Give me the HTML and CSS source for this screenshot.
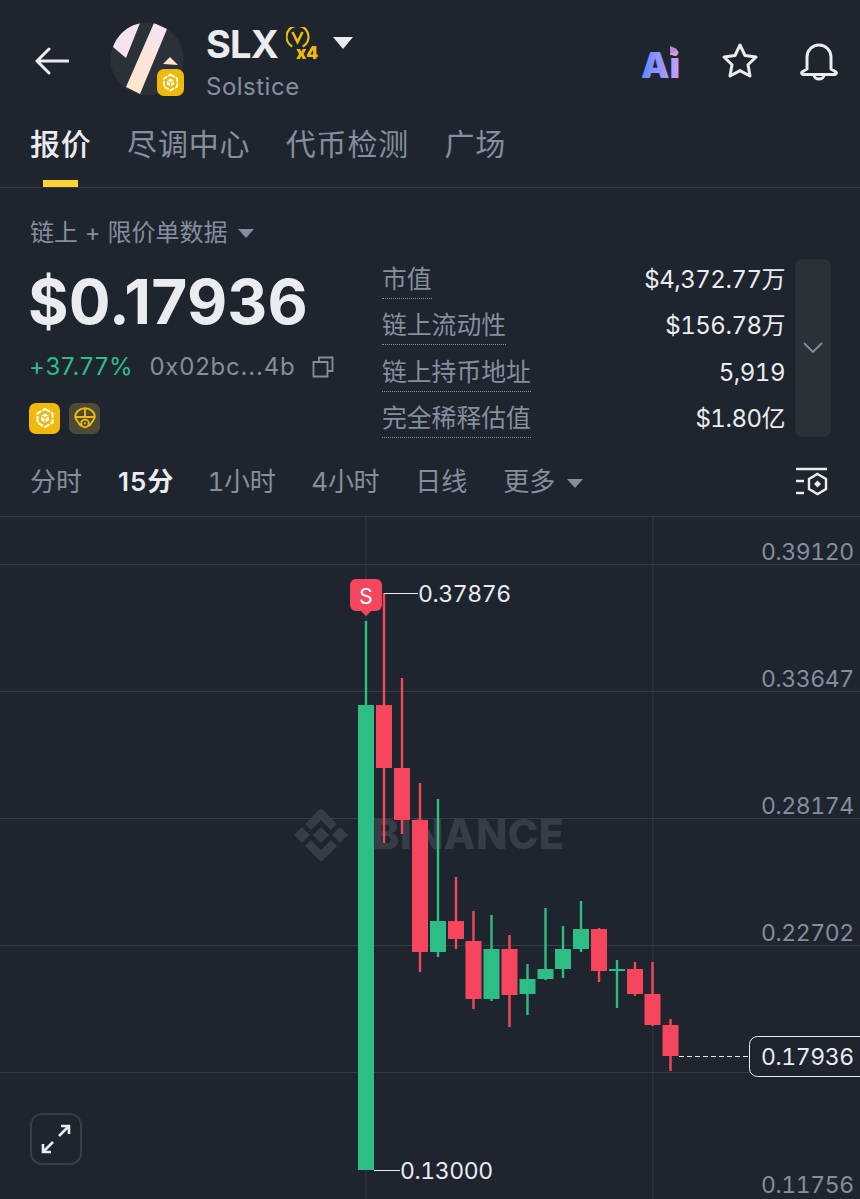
FILE: index.html
```html
<!DOCTYPE html>
<html lang="zh">
<head>
<meta charset="utf-8">
<title>SLX</title>
<link rel="stylesheet" href="styles.css">
</head>
<body>
<div class="app">
  <header class="top">
    <svg class="back" viewBox="0 0 34 28" width="34" height="28"><path d="M33 14H2M14 2 2 14l12 12" fill="none" stroke="#eaecef" stroke-width="3" stroke-linecap="round" stroke-linejoin="round"/></svg>
    <div class="avatar">
      <svg viewBox="0 0 74 74" width="74" height="74">
        <defs>
          <linearGradient id="stripe" x1="0.7" y1="0" x2="0.2" y2="1"><stop offset="0" stop-color="#f6e4ee"/><stop offset="1" stop-color="#ffe6c8"/></linearGradient>
          <clipPath id="disc"><circle cx="37" cy="37" r="36.500"/></clipPath>
        </defs>
        <circle cx="37" cy="37" r="36.500" fill="#2b3139"/>
        <g clip-path="url(#disc)">
          <path d="M3 25A36.500 36.500 0 0 1 30 1L16 36Z" fill="#f5e3ee"/>
          <path d="M44 1 57 7 30 72 16 65Z" fill="url(#stripe)"/>
          <path d="M53 42 60 35 68 43Z" fill="#fbe4d3"/>
        </g>
      </svg>
      <span class="chain chain-small">
        <svg viewBox="0 0 24 24" width="21" height="21"><use href="#cube"/></svg>
      </span>
    </div>
    <div class="title">
      <div class="title-row">
        <span class="symbol">SLX</span>
        <svg class="vx" viewBox="0 0 34 36" width="34" height="36">
          <path d="M5.500 19a11 11 0 1 1 12 0" fill="none" stroke="#f0b90b" stroke-width="2.200" stroke-linecap="round"/>
          <path d="M6.500 5l5 10 5-10" fill="none" stroke="#f0b90b" stroke-width="2.600"/>
          <text x="10" y="32" class="vx-text">x4</text>
        </svg>
        <svg class="caret" viewBox="0 0 20 12" width="20" height="12"><path d="M0 0h20L10 12Z" fill="#eaecef"/></svg>
      </div>
      <div class="name">Solstice</div>
    </div>
    <div class="actions">
      <svg viewBox="0 -4 46 50" width="46" height="50" class="ai">
        <defs><linearGradient id="aig" x1="0" y1="0" x2="1" y2="0"><stop offset="0" stop-color="#5f8bff"/><stop offset="1" stop-color="#c9a2fb"/></linearGradient></defs>
        <text x="0" y="33" class="ai-text" fill="url(#aig)">Ai</text>
        <path d="M29 1 36 4 33 8 30 10 29 6Z" fill="#b58af0"/>
        <path d="M29 9h6" stroke="#f59f7f" stroke-width="2"/>
      </svg>
      <svg class="star" viewBox="0 0 38 38" width="38" height="38"><path d="M19 3l5 10.500 11 1.500-8 7.800 2 11.200-10-5.400-10 5.400 2-11.200-8-7.800 11-1.500Z" fill="none" stroke="#eaecef" stroke-width="3" stroke-linejoin="round"/></svg>
      <svg viewBox="0 0 40 42" width="40" height="42"><path d="M8 29V17a12 12 0 0 1 24 0v12l5 3a1.500 1.500 0 0 1-1 2.500H4a1.500 1.500 0 0 1-1-2.500ZM15 35a5 4 0 0 0 10 0" fill="none" stroke="#eaecef" stroke-width="3" stroke-linejoin="round"/></svg>
    </div>
  </header>

  <nav class="tabs">
    <span class="tab tab-on">报价</span>
    <span class="tab">尽调中心</span>
    <span class="tab">代币检测</span>
    <span class="tab">广场</span>
  </nav>

  <section class="info">
    <div class="source">链上 + 限价单数据 <i class="tri"></i></div>
    <div class="info-main">
      <div class="price-col">
        <div class="price">$0.17936</div>
        <div class="sub">
          <span class="change">+37.77%</span>
          <span class="addr">0x02bc...4b</span>
          <svg viewBox="0 0 22 22" width="22" height="22"><path d="M7 5V1.500h13.500V15H16M1.500 6h14v14.500h-14Z" fill="none" stroke="#848e9c" stroke-width="1.800"/></svg>
        </div>
        <div class="badges">
          <span class="chain"><svg viewBox="0 0 24 24" width="24" height="24"><use href="#cube"/></svg></span>
          <span class="chain chain-dim">
            <svg viewBox="0 0 24 24" width="26" height="26"><path d="M3 11a9 8 0 0 1 18 0c0 1.500-4 7-5 8H8c-1-1-5-6.500-5-8ZM3 11h18M12 3v8" fill="none" stroke="#f0b90b" stroke-width="1.800"/><circle cx="12" cy="17" r="3.500" fill="#4d4a35" stroke="#f0b90b" stroke-width="1.800"/><circle cx="12" cy="17" r="1" fill="#f0b90b"/></svg>
          </span>
        </div>
      </div>
      <dl class="stats">
        <div class="stat"><dt><span>市值</span></dt><dd>$4,372.77万</dd></div>
        <div class="stat"><dt><span>链上流动性</span></dt><dd>$156.78万</dd></div>
        <div class="stat"><dt><span>链上持币地址</span></dt><dd>5,919</dd></div>
        <div class="stat"><dt><span>完全稀释估值</span></dt><dd>$1.80亿</dd></div>
      </dl>
      <div class="fold">
        <svg viewBox="0 0 20 12" width="20" height="12"><path d="M1 1l9 9 9-9" fill="none" stroke="#848e9c" stroke-width="1.800"/></svg>
      </div>
    </div>
  </section>

  <div class="intervals">
    <span>分时</span>
    <span class="int-on">15分</span>
    <span class="int-num">1小时</span>
    <span class="int-num">4小时</span>
    <span>日线</span>
    <span>更多 <i class="tri"></i></span>
    <svg class="int-icon" viewBox="0 0 32 30" width="32" height="30">
      <path d="M0 2h31M0 14h8M0 26h8" stroke="#eaecef" stroke-width="2.400"/>
      <path d="M21.500 7l8.500 5v10l-8.500 5-8.500-5V12Z" fill="none" stroke="#eaecef" stroke-width="2.400"/>
      <path d="M21.500 13.500l3.500 3.500-3.500 3.500-3.500-3.500Z" fill="#eaecef"/>
    </svg>
  </div>

  <div class="chart">
    <svg class="plot" viewBox="0 517 860 682" width="860" height="682">
      <g class="grid">
        <path d="M366 517V1199M653 517V1199M0 564.500H860M0 691.500H860M0 818.500H860M0 945.500H860M0 1072.500H860"/>
      </g>
      <g class="mark">
        <path d="M321 808 337 824 331 830 321 820 311 830 305 824ZM321 862 337 846 331 840 321 850 311 840 305 846ZM302 827 310 835 302 843 294 835ZM340 827 348 835 340 843 332 835ZM321 827 329 835 321 843 313 835Z"/>
        <text x="372" y="849" class="mark-text">BINANCE</text>
      </g>

      <g class="up">
        <rect x="364.800" y="621" width="2.400" height="84"/><rect x="358" y="705" width="16" height="465"/>
        <rect x="436.800" y="799" width="2.400" height="158"/><rect x="430" y="921" width="16" height="31"/>
        <rect x="490.300" y="915" width="2.400" height="86"/><rect x="483.500" y="949" width="16" height="50"/>
        <rect x="526.300" y="964" width="2.400" height="51"/><rect x="519.500" y="979" width="16" height="15"/>
        <rect x="544.300" y="908" width="2.400" height="72"/><rect x="537.500" y="969" width="16" height="10"/>
        <rect x="561.800" y="926" width="2.400" height="52"/><rect x="555" y="949" width="16" height="20"/>
        <rect x="579.800" y="901" width="2.400" height="51"/><rect x="573" y="929" width="16" height="20"/>
        <rect x="615.800" y="960" width="2.400" height="48"/><rect x="609" y="969" width="16" height="2"/>
      </g>
      <g class="down">
        <rect x="382.800" y="593" width="2.400" height="250"/><rect x="376" y="705" width="16" height="63"/>
        <rect x="400.800" y="678" width="2.400" height="156"/><rect x="394" y="768" width="16" height="52"/>
        <rect x="418.800" y="783" width="2.400" height="189"/><rect x="412" y="820" width="16" height="132"/>
        <rect x="454.800" y="877" width="2.400" height="72"/><rect x="448" y="921" width="16" height="18"/>
        <rect x="472.300" y="911" width="2.400" height="98"/><rect x="465.500" y="941" width="16" height="58"/>
        <rect x="508.300" y="935" width="2.400" height="92"/><rect x="501.500" y="949" width="16" height="46"/>
        <rect x="597.800" y="928" width="2.400" height="54"/><rect x="591" y="929" width="16" height="42"/>
        <rect x="633.800" y="962" width="2.400" height="34"/><rect x="627" y="969" width="16" height="25"/>
        <rect x="651.300" y="962" width="2.400" height="64"/><rect x="644.500" y="994" width="16" height="31"/>
        <rect x="669.300" y="1019" width="2.400" height="52"/><rect x="662.500" y="1025" width="16" height="31"/>
      </g>

      <path class="guide" d="M384 593.500H418M374 1170.500H400"/>
      <path class="dash" d="M679 1056.500H749"/>

      <path class="sell" d="M356 579h20a6 6 0 0 1 6 6v20a6 6 0 0 1-6 6h-5l-5 5-5-5h-5a6 6 0 0 1-6-6v-20a6 6 0 0 1 6-6Z"/>
      <text x="366" y="604" class="sell-text">S</text>

      <text x="418" y="602" class="val">0.37876</text>
      <text x="400" y="1179" class="val">0.13000</text>

      <text x="761" y="560" class="axis">0.39120</text>
      <text x="761" y="687" class="axis">0.33647</text>
      <text x="761" y="814" class="axis">0.28174</text>
      <text x="761" y="941" class="axis">0.22702</text>
      <text x="761" y="1193" class="axis">0.11756</text>
      <rect x="749.500" y="1036.500" width="120" height="40" rx="8" class="tag"/>
      <text x="761" y="1065" class="val">0.17936</text>
    </svg>
    <button class="expand" type="button" aria-label="expand">
      <svg viewBox="0 0 32 32" width="32" height="32"><path d="M3 29 13 19M19 13 29 3M21 3h8v8M3 21v8h8" fill="none" stroke="#eaecef" stroke-width="2.600"/></svg>
    </button>
  </div>
</div>

<svg class="defs" width="0" height="0">
  <symbol id="cube" viewBox="0 0 24 24">
    <path d="M12 3l7.500 4.300v9.400L12 21l-7.500-4.300V7.300Z" fill="none" stroke="#fff" stroke-width="2" stroke-dasharray="6 1.200"/>
    <path d="M12 7.500l4 2.300v4.500l-4 2.300-4-2.300V9.800Z" fill="#fff"/>
    <path d="M8 9.800l4 2.300 4-2.300M12 12v4.500" fill="none" stroke="#f0b90b" stroke-width="1.200"/>
  </symbol>
</svg>
</body>
</html>
```
FILE: styles.css
```css
* { box-sizing: border-box; }
html, body { margin: 0; padding: 0; background: #1f252f; }
body {
  font-family: Inter, "Noto Sans CJK SC", sans-serif;
  color: #eaecef;
  overflow: hidden;
}
.app { width: 860px; height: 1199px; display: flex; flex-direction: column; overflow: hidden; }
.defs { position: absolute; }

.top { height: 120px; flex: none; display: flex; align-items: flex-start; padding: 22px 21px 0 35px; }
.back { margin-top: 25px; margin-right: 41px; flex: none; }
.avatar { position: relative; width: 74px; height: 74px; flex: none; margin-right: 22px; }
.avatar > svg { display: block; }
.title { flex: 1; }
.title-row { display: flex; align-items: flex-start; height: 44px; }
.symbol { font-size: 38px; font-weight: 700; line-height: 44px; letter-spacing: -0.800px; }
.vx { margin: 5px 0 0 8px; flex: none; }
.vx-text { font: 900 17px Inter, sans-serif; fill: #f0b90b; }
.caret { margin: 15px 0 0 13px; }
.name { font-size: 24px; line-height: 32px; color: #848e9c; margin-top: 5px; letter-spacing: 0.500px; }
.actions { display: flex; align-items: flex-start; gap: 40px; margin-top: 18px; }
.ai { margin: 1px -6px 0 0; }
.ai-text { font: 900 36px Inter, sans-serif; }
.star { margin-top: 2px; }

.chain {
  width: 31px; height: 31px; border-radius: 7px; background: #f0b90b;
  display: flex; align-items: center; justify-content: center;
}
.chain-small { position: absolute; right: 0; bottom: 0; width: 27px; height: 27px; }
.chain-dim { background: #4d4a35; }

.tabs {
  height: 67.500px; flex: none; display: flex; gap: 35.500px; padding-left: 30px;
  border-bottom: 1px solid #333b44; font-size: 30px; line-height: 48px; color: #848e9c;
}
.tab { position: relative; height: 67px; letter-spacing: 0.800px; }
.tab-on { color: #eaecef; font-weight: 500; }
.tab-on::after {
  content: ""; position: absolute; left: 13px; right: 14px; bottom: 0; height: 7px; background: #fcd535;
}

.info { padding: 26px 29px 0 30px; height: 264px; flex: none; }
.source { font-size: 24px; line-height: 38px; color: #848e9c; }
.tri {
  display: inline-block; width: 0; height: 0; margin-left: 4px; vertical-align: 3px;
  border-left: 8px solid transparent; border-right: 8px solid transparent; border-top: 9px solid #848e9c;
}
.info-main { display: flex; margin-top: 8px; }
.price-col { width: 352px; flex: none; }
.price { font-size: 62px; font-weight: 700; line-height: 76px; margin: 4px 0 0 -2px; letter-spacing: 0.200px; }
.sub { display: flex; align-items: center; height: 32px; margin-top: 11px; font-size: 24px; letter-spacing: 0.800px; }
.change { color: #2ebd85; margin-left: -1px; }
.addr { color: #848e9c; margin: 0 16px 0 16px; }
.badges { display: flex; gap: 9px; margin-top: 20px; margin-left: -1px; }

.stats { margin: 1px 0 0; width: 403px; flex: none; display: flex; flex-direction: column; }
.stat { height: 46.500px; display: flex; justify-content: space-between; align-items: flex-start; }
.stat dt { font-size: 24.800px; line-height: 37px; color: #848e9c; }
.stat dt span { display: block; border-bottom: 1px dotted #848e9c; }
.stat dd { margin: 0; font-size: 24px; line-height: 37px; letter-spacing: -0.500px; font-variant-numeric: tabular-nums; }
.fold {
  width: 36px; height: 178px; margin: -1px 0 0 10px; border-radius: 8px; background: #2b3139;
  display: flex; align-items: center; justify-content: center;
}

.intervals {
  height: 65px; flex: none; display: flex; align-items: flex-start; gap: 36px; padding: 12px 32px 0 30px;
  border-bottom: 1px solid #333b44; font-size: 26px; line-height: 36px; color: #848e9c;
}
.int-num { font-variant-numeric: tabular-nums; letter-spacing: -0.300px; }
.int-on { color: #eaecef; font-weight: 600; letter-spacing: 1px; margin-right: -3px; }
.int-icon { margin-left: auto; margin-top: 3px; }

.chart { position: relative; height: 682px; flex: none; }
.plot { display: block; }
.grid path { stroke: #333b44; stroke-width: 1; fill: none; }
.mark { fill: #373d46; }
.mark-text { font: 800 41px Inter, sans-serif; letter-spacing: 0.500px; }
.up rect { fill: #2ebd85; }
.down rect { fill: #f6465d; }
.guide { stroke: #eaecef; stroke-width: 1; fill: none; }
.dash { stroke: #eaecef; stroke-width: 1; stroke-dasharray: 5 3; fill: none; }
.sell { fill: #f6465d; }
.sell-text { font: 400 21px Inter, sans-serif; fill: #fff; text-anchor: middle; }
.val { font: 400 23px Inter, sans-serif; fill: #eaecef; letter-spacing: -0.400px; font-variant-numeric: tabular-nums; }
.axis { font: 400 23px Inter, sans-serif; fill: #848e9c; letter-spacing: -0.400px; font-variant-numeric: tabular-nums; }
.tag { fill: #1f252f; stroke: #eaecef; stroke-width: 1; }
.expand {
  position: absolute; left: 30px; top: 596px; width: 52px; height: 52px; padding: 0;
  background: transparent; border: 2px solid #373e47; border-radius: 12px;
  display: flex; align-items: center; justify-content: center;
}
```
